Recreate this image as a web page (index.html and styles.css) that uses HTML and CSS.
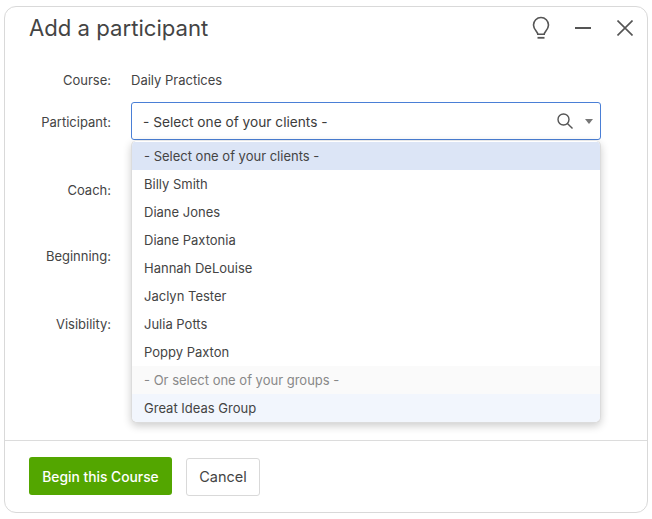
FILE: index.html
```html
<!DOCTYPE html>
<html lang="en">
<head>
    <meta charset="UTF-8">
    <meta name="viewport" content="width=device-width, initial-scale=1.0">
    <title>Add a participant</title>
    <link rel="stylesheet" href="styles.css">
</head>
<body>
    <div class="dialog">
        <div class="dialog-header">
            <h1>Add a participant</h1>
            <div class="dialog-actions">
                <svg class="icon-bulb" width="20" height="24" viewBox="0 0 20 24" fill="none" stroke="#555" stroke-width="1.6">
                    <path d="M6.8 17.2c0-2.600-4.300-4.600-4.300-9.200a7.500 7.500 0 0 1 15 0c0 4.600-4.300 6.600-4.300 9.200z"/>
                    <path d="M6.500 20.800h7" stroke-width="1.800"/>
                </svg>
                <svg class="icon-min" width="16" height="2" viewBox="0 0 16 2"><rect width="16" height="2" fill="#555"/></svg>
                <svg class="icon-close" width="16" height="16" viewBox="0 0 16 16" stroke="#555" stroke-width="1.6"><path d="M.5.500l15 15M15.500.500l-15 15"/></svg>
            </div>
        </div>

        <div class="dialog-body">
            <div class="form-row row-course">
                <label>Course:</label>
                <span class="value">Daily Practices</span>
            </div>
            <div class="form-row row-participant">
                <label>Participant:</label>
                <div class="select-wrap">
                    <div class="select-box">
                        <span>- Select one of your clients -</span>
                        <svg class="icon-search" width="16" height="16" viewBox="0 0 16 16" fill="none" stroke="#555" stroke-width="1.4">
                            <circle cx="6.500" cy="6.500" r="5.500"/>
                            <path d="M10.400 10.400l5.100 5.100"/>
                        </svg>
                        <span class="caret"></span>
                    </div>
                    <ul class="dropdown">
                        <li class="selected">- Select one of your clients -</li>
                        <li>Billy Smith</li>
                        <li>Diane Jones</li>
                        <li>Diane Paxtonia</li>
                        <li>Hannah DeLouise</li>
                        <li>Jaclyn Tester</li>
                        <li>Julia Potts</li>
                        <li>Poppy Paxton</li>
                        <li class="group-title">- Or select one of your groups -</li>
                        <li class="hovered">Great Ideas Group</li>
                    </ul>
                </div>
            </div>
            <div class="form-row row-coach"><label>Coach:</label></div>
            <div class="form-row row-beginning"><label>Beginning:</label></div>
            <div class="form-row row-visibility"><label>Visibility:</label></div>
        </div>

        <div class="dialog-footer">
            <button class="btn btn-primary">Begin this Course</button>
            <button class="btn btn-cancel">Cancel</button>
        </div>
    </div>
</body>
</html>
```

FILE: styles.css
```css
* {
    box-sizing: border-box;
}

body {
    margin: 0;
    padding: 6px 4px 5px;
    font-family: Inter, "Liberation Sans", sans-serif;
    font-size: 13px;
    color: #444;
    background-color: #fff;
}

.dialog {
    display: flex;
    flex-direction: column;
    height: 507px;
    border: 1px solid #d9d9d9;
    border-radius: 12px;
}

.dialog-header {
    display: flex;
    align-items: center;
    justify-content: space-between;
    height: 42px;
    padding: 0 14px 0 24px;
}
.dialog-header h1 {
    margin: 0;
    font-size: 22.15px;
    font-weight: 400;
    color: #444;
}
.dialog-actions {
    display: flex;
    align-items: center;
}
.icon-bulb {
    margin-top: 2px;
    overflow: visible;
}
.icon-min {
    margin-left: 24px;
}
.icon-close {
    margin-left: 26px;
}

.dialog-body {
    flex: 1;
    padding-top: 21px;
}
.form-row {
    display: flex;
    align-items: center;
    height: 38px;
}
.form-row label {
    width: 106px;
    margin-right: 20px;
    text-align: right;
}
.row-course {
    height: 20px;
    margin-bottom: 12px;
}
.row-participant label {
    padding-top: 2px;
}
.row-coach {
    margin-top: 31px;
}
.row-beginning {
    margin-top: 28px;
}
.row-visibility {
    margin-top: 30px;
}

.select-wrap {
    position: relative;
    width: 470px;
}
.select-box {
    display: flex;
    align-items: center;
    height: 38px;
    padding: 0 7px 0 11px;
    border: 1px solid #4a7fd6;
    border-radius: 3px;
    font-size: 13.7px;
}
.select-box span:first-child {
    flex: 1;
    padding-top: 2px;
    color: #3c3c3c;
}
.caret {
    width: 0;
    height: 0;
    margin-left: 12px;
    border-left: 4px solid transparent;
    border-right: 4px solid transparent;
    border-top: 5px solid #777;
}

.dropdown {
    position: absolute;
    top: 38px;
    left: 0;
    right: 0;
    margin: 0;
    padding: 1px 0 0;
    list-style: none;
    background-color: #fff;
    border: 1px solid #dcdcdc;
    border-top-color: #e8e8e8;
    border-radius: 6px;
    box-shadow: 0 3px 8px rgba(0, 0, 0, 0.2);
    overflow: hidden;
}
.dropdown li {
    height: 28px;
    padding: 0 12px;
    line-height: 28px;
}
.dropdown .selected {
    background-color: #dce5f6;
}
.dropdown .group-title {
    background-color: #fafafa;
    color: #888;
}
.dropdown .hovered {
    background-color: #f2f6fd;
}

.dialog-footer {
    display: flex;
    align-items: flex-start;
    height: 72px;
    padding: 16px 24px 0;
    border-top: 1px solid #dcdcdc;
}
.btn {
    height: 38px;
    border-radius: 3px;
    font-family: inherit;
}
.btn-primary {
    width: 143px;
    padding-top: 2px;
    border: none;
    background-color: #53a600;
    color: #fff;
    font-size: 13.8px;
    font-weight: 500;
}
.btn-cancel {
    width: 74px;
    margin-top: 1px;
    margin-left: 14px;
    padding-bottom: 3px;
    border: 1px solid #d9d9d9;
    background-color: #fff;
    color: #444;
    font-size: 14.5px;
}
```
